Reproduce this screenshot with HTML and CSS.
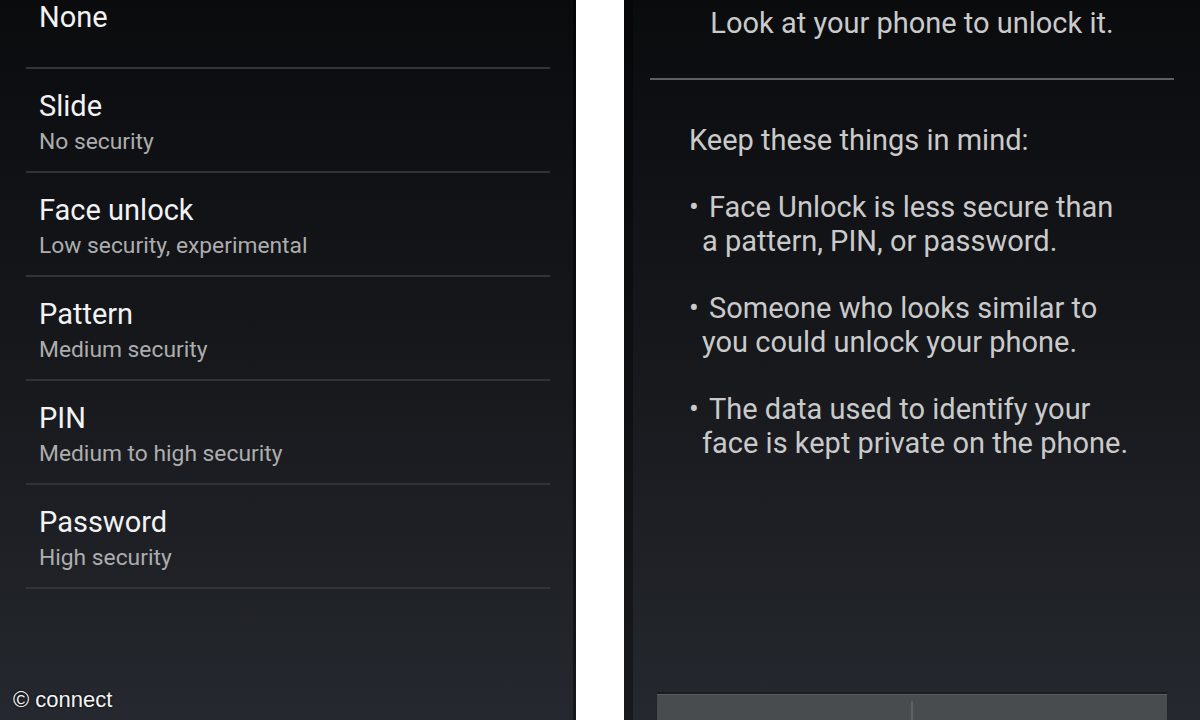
FILE: index.html
```html
<!DOCTYPE html>
<html>
<head>
    <title>Screen lock and Face Unlock</title>
    <link rel="stylesheet" href="styles.css">
</head>
<body>
    <section class="panel panel-left">
        <ul class="lock-list">
            <li class="lock-item single">
                <span class="lock-title">None</span>
            </li>
            <li class="lock-item">
                <span class="lock-title">Slide</span>
                <span class="lock-sub">No security</span>
            </li>
            <li class="lock-item">
                <span class="lock-title">Face unlock</span>
                <span class="lock-sub">Low security, experimental</span>
            </li>
            <li class="lock-item">
                <span class="lock-title">Pattern</span>
                <span class="lock-sub">Medium security</span>
            </li>
            <li class="lock-item">
                <span class="lock-title">PIN</span>
                <span class="lock-sub">Medium to high security</span>
            </li>
            <li class="lock-item">
                <span class="lock-title">Password</span>
                <span class="lock-sub">High security</span>
            </li>
        </ul>
    </section>

    <div class="gap"></div>

    <section class="panel panel-right">
        <p class="notice">Look at your phone to unlock it.</p>
        <hr class="rule">
        <div class="tips">
            <p>Keep these things in mind:</p>
            <p class="tip"><span class="dot">•</span>Face Unlock is less secure than<br>a pattern, PIN, or password.</p>
            <p class="tip"><span class="dot">•</span>Someone who looks similar to<br>you could unlock your phone.</p>
            <p class="tip"><span class="dot">•</span>The data used to identify your<br>face is kept private on the phone.</p>
        </div>
        <div class="buttons">
            <span class="btn"></span>
            <span class="btn"></span>
        </div>
    </section>

    <div class="watermark">© connect</div>
</body>
</html>
```

FILE: styles.css
```css
body {
    margin: 0;
    width: 1200px;
    height: 720px;
    overflow: hidden;
    display: flex;
    position: relative;
    background-color: #fff;
    font-family: Roboto, "Noto Sans", sans-serif;
}

.panel {
    width: 576px;
    height: 720px;
    overflow: hidden;
    background: linear-gradient(#0a0b0d, #16181c 50%, #25282e);
}

.gap {
    width: 48px;
    background-color: #fff;
}

/* left: lock type list */

.panel-left {
    box-shadow: inset -3px 0 0 rgba(0, 0, 0, 0.4);
}

.lock-list {
    list-style: none;
    margin: -35px 26px 0;
    padding: 0;
}

.lock-item {
    display: flex;
    flex-direction: column;
    box-sizing: border-box;
    height: 104px;
    padding: 20px 0 0 13px;
    border-bottom: 2px solid #303338;
}

.lock-item.single {
    padding-top: 35px;
}

.lock-title {
    font-size: 29px;
    line-height: 34px;
    color: #f2f2f2;
}

.lock-sub {
    margin-top: 6px;
    font-size: 22.8px;
    line-height: 26px;
    color: #adadad;
}

/* right: face unlock info */

.panel-right {
    display: flex;
    flex-direction: column;
    box-shadow: inset 9px 0 0 rgba(0, 0, 0, 0.35);
    color: #cacaca;
    font-size: 29px;
    line-height: 33.6px;
}

.notice {
    margin: 0;
    padding-top: 7px;
    text-align: center;
}

.rule {
    margin: 37px 26px 0;
    height: 2px;
    border: 0;
    background-color: #5c5f63;
}

.tips {
    margin-top: 44px;
    padding-left: 65px;
}

.tips p {
    margin: 0;
}

.tips p + p {
    margin-top: 33.8px;
}

.tip {
    padding-left: 13px;
    text-indent: -13px;
}

.dot {
    display: inline-block;
    width: 20px;
    text-indent: 0;
}

.buttons {
    display: flex;
    margin: auto 33px 0;
    height: 25px;
    background-color: #484c4f;
    border-top: 1px solid #5b5f62;
    box-shadow: 0 -2px 0 #1b1d21;
}

.btn {
    flex: 1;
}

.btn + .btn {
    border-left: 2px solid #5e6266;
    margin-top: 6px;
}

.watermark {
    position: absolute;
    left: 13px;
    top: 687px;
    font-family: "Liberation Sans", Arial, sans-serif;
    font-size: 22px;
    color: #f4f4f4;
    text-shadow: 0 0 3px rgba(0, 0, 0, 0.9);
}
```
